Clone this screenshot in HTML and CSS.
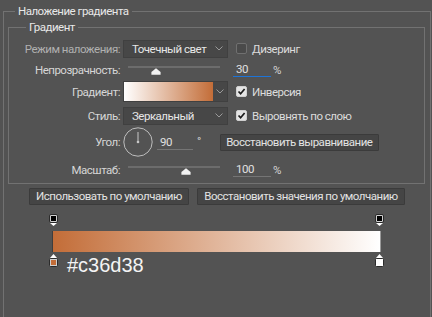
FILE: index.html
```html
<!DOCTYPE html>
<html lang="ru">
  <head>
    <meta charset="utf-8">
    <title>Наложение градиента</title>
    <link rel="stylesheet" href="styles.css">
  </head>
  <body>
    <fieldset class="group outer">
      <legend>Наложение градиента</legend>
      <fieldset class="group inner">
        <legend>Градиент</legend>
        <div class="form">
          <label class="lbl dim">Режим наложения:</label>
          <div class="select">
            <span>Точечный свет</span>
            <svg class="chev" width="8" height="5" viewBox="0 0 8 5"><path d="M0.5 0.5 L4 4 L7.5 0.5" fill="none" stroke="#9a9a9a"/></svg>
          </div>
          <div class="check"><span class="box"></span>Дизеринг</div>

          <label class="lbl">Непрозрачность:</label>
          <div class="slider">
            <div class="track"></div>
            <svg class="thumb" style="left: 30%;" width="10" height="7" viewBox="0 0 10 7"><path d="M5 0.3 L9.6 4 V6.8 H0.4 V4 Z" fill="#f2f2f2"/></svg>
          </div>
          <div class="num"><span class="field active">30</span><span class="unit">%</span></div>

          <label class="lbl">Градиент:</label>
          <div class="grad-pick">
            <span class="swatch"></span>
            <span class="drop"><svg class="chev" width="8" height="5" viewBox="0 0 8 5"><path d="M0.5 0.5 L4 4 L7.5 0.5" fill="none" stroke="#9a9a9a"/></svg></span>
          </div>
          <div class="check"><span class="box on"><svg width="9" height="9" viewBox="0 0 9 9"><path d="M1.5 4.5 L3.6 6.7 L7.6 2" fill="none" stroke="#1b1b1b" stroke-width="1.7"/></svg></span>Инверсия</div>

          <label class="lbl">Стиль:</label>
          <div class="select">
            <span>Зеркальный</span>
            <svg class="chev" width="8" height="5" viewBox="0 0 8 5"><path d="M0.5 0.5 L4 4 L7.5 0.5" fill="none" stroke="#9a9a9a"/></svg>
          </div>
          <div class="check"><span class="box on"><svg width="9" height="9" viewBox="0 0 9 9"><path d="M1.5 4.5 L3.6 6.7 L7.6 2" fill="none" stroke="#1b1b1b" stroke-width="1.7"/></svg></span>Выровнять по слою</div>

          <label class="lbl">Угол:</label>
          <div class="angle">
            <svg class="dial" width="30" height="30" viewBox="0 0 30 30">
              <circle cx="15" cy="15" r="14.2" fill="none" stroke="#bdbdbd"/>
              <line x1="15" y1="15" x2="15" y2="5" stroke="#c8c8c8"/>
              <circle cx="15" cy="15" r="1.3" fill="#c8c8c8"/>
            </svg>
            <span class="field">90</span>
            <span class="deg">°</span>
            <button class="btn align">Восстановить выравнивание</button>
          </div>

          <label class="lbl">Масштаб:</label>
          <div class="slider">
            <div class="track"></div>
            <svg class="thumb" style="left: 62.5%;" width="10" height="7" viewBox="0 0 10 7"><path d="M5 0.3 L9.6 4 V6.8 H0.4 V4 Z" fill="#f2f2f2"/></svg>
          </div>
          <div class="num"><span class="field">100</span><span class="unit">%</span></div>
        </div>
      </fieldset>

      <div class="actions">
        <button class="btn use-default">Использовать по умолчанию</button>
        <button class="btn reset-default">Восстановить значения по умолчанию</button>
      </div>

      <div class="editor">
        <div class="stops">
          <svg width="9" height="12" viewBox="0 0 9 12">
            <rect x="0.5" y="0.5" width="8" height="8" rx="1.5" fill="#d0d0d0" stroke="#2b2b2b"/>
            <rect x="2" y="2" width="5" height="5" fill="#000"/>
            <path d="M1 9 H8 L4.5 12 Z" fill="#fff"/>
          </svg>
          <svg width="9" height="12" viewBox="0 0 9 12">
            <rect x="0.5" y="0.5" width="8" height="8" rx="1.5" fill="#d0d0d0" stroke="#2b2b2b"/>
            <rect x="2" y="2" width="5" height="5" fill="#000"/>
            <path d="M1 9 H8 L4.5 12 Z" fill="#fff"/>
          </svg>
        </div>
        <div class="bar"></div>
        <div class="stops bottom">
          <svg width="9" height="13" viewBox="0 0 9 13">
            <path d="M4.5 0 L8 4 H1 Z" fill="#fff"/>
            <rect x="0.5" y="4.5" width="8" height="8" rx="1" fill="#d0d0d0" stroke="#2b2b2b"/>
            <rect x="2" y="6" width="5" height="5" fill="#c36d38"/>
          </svg>
          <span class="hex">#c36d38</span>
          <svg width="9" height="13" viewBox="0 0 9 13">
            <path d="M4.5 0 L8 4 H1 Z" fill="#fff"/>
            <rect x="0.5" y="4.5" width="8" height="8" rx="1" fill="#fff" stroke="#2b2b2b"/>
          </svg>
        </div>
      </div>
    </fieldset>
  </body>
</html>
```

FILE: styles.css
```css
* {
  box-sizing: border-box;
}

body {
  margin: 0;
  height: 317px;
  overflow: hidden;
  background: #535353;
  font-family: Roboto, "Liberation Sans", sans-serif;
  font-size: 11.5px;
  letter-spacing: -0.5px;
  color: #d6d6d6;
  white-space: nowrap;
}

/* group boxes */
.group {
  margin: 0;
  padding: 0;
  min-width: 0;
  border: 1px solid #727272;
}
.group > legend {
  padding: 0 3px;
  line-height: 14px;
  font-size: 11.5px;
  color: #e8e8e8;
}
.outer {
  margin: 4px 1px 0 3px;
  height: 330px;
}
.outer > legend {
  margin-left: 11px;
}
.inner {
  margin: 2px 5px 0 4px;
  padding-top: 4px;
}
.inner > legend {
  margin-left: 17px;
}

/* form grid */
.form {
  display: grid;
  grid-template-columns: 111px 105px 1fr;
  grid-template-rows: 21px 21px 23px 25px 28px 27px;
  column-gap: 3px;
  align-items: center;
}
.lbl {
  text-align: right;
}
.lbl.dim {
  color: #b0b0b0;
}

.select {
  height: 18px;
  display: flex;
  align-items: center;
  justify-content: space-between;
  padding: 0 4px 0 8px;
  background: #474747;
  border: 1px solid #404040;
  color: #e6e6e6;
}

.check {
  margin-left: 5px;
  display: flex;
  align-items: center;
  gap: 5px;
  color: #dcdcdc;
}
.check .box {
  width: 11px;
  height: 11px;
  border: 1px solid #707070;
  border-radius: 2px;
  background: #4a4a4a;
  display: flex;
  align-items: center;
  justify-content: center;
}
.check .box.on {
  background: #e4e4e4;
  border-color: #d0d0d0;
}

/* sliders */
.slider {
  position: relative;
  height: 10px;
  margin: 0 8px 0 5px;
}
.track {
  height: 2px;
  margin-top: 1px;
  background: #6c6c6c;
}
.thumb {
  position: absolute;
  top: 3px;
  margin-left: -5px;
}

.num {
  margin-left: 2px;
  display: flex;
  align-items: center;
}
.field {
  display: inline-block;
  width: 38px;
  height: 15px;
  line-height: 14px;
  padding: 0 3px;
  border-bottom: 1px solid #757575;
  color: #e0e0e0;
}
.field.active {
  border-bottom-color: #1d74d8;
}
.unit {
  margin-left: 2px;
}

/* gradient picker */
.grad-pick {
  height: 21px;
  display: flex;
  border: 1px solid #404040;
}
.swatch {
  flex: 1;
  background: linear-gradient(to right, #ffffff, #c36d38);
}
.drop {
  width: 14px;
  background: #474747;
  display: flex;
  align-items: center;
  justify-content: center;
}

/* angle row */
.angle {
  grid-column: 2 / 4;
  display: flex;
  align-items: center;
}
.angle .field {
  width: 36px;
  margin-left: 4px;
}
.deg {
  margin-left: 4px;
  margin-top: -3px;
}
.btn.align {
  width: 159px;
  margin-left: 19px;
}

/* buttons */
.btn {
  height: 17px;
  padding: 0;
  font: inherit;
  letter-spacing: inherit;
  line-height: 15px;
  color: #e2e2e2;
  background: #454545;
  border: 1px solid #3b3b3b;
  border-radius: 1px;
}
.actions {
  margin-top: 4px;
  display: flex;
  justify-content: center;
  gap: 8px;
}
.use-default {
  width: 160px;
}
.reset-default {
  width: 208px;
}

/* gradient editor */
.editor {
  margin: 9px 0 0 45px;
  width: 335px;
}
.stops {
  display: flex;
  justify-content: space-between;
}
.stops svg {
  display: block;
}
.bar {
  margin: 5px 3px 0;
  height: 21px;
  border-left: 1px solid #3e3e3e;
  border-right: 1px solid #9a9a9a;
  background: linear-gradient(to right, #c36d38, #ffffff);
}
.stops.bottom {
  margin-top: 2px;
  align-items: flex-start;
}
.hex {
  margin-left: 9px;
  margin-right: auto;
  font-family: "Liberation Sans", Arial, sans-serif;
  font-size: 20px;
  letter-spacing: 0;
  line-height: 23px;
  color: #f4f4f4;
}
```
